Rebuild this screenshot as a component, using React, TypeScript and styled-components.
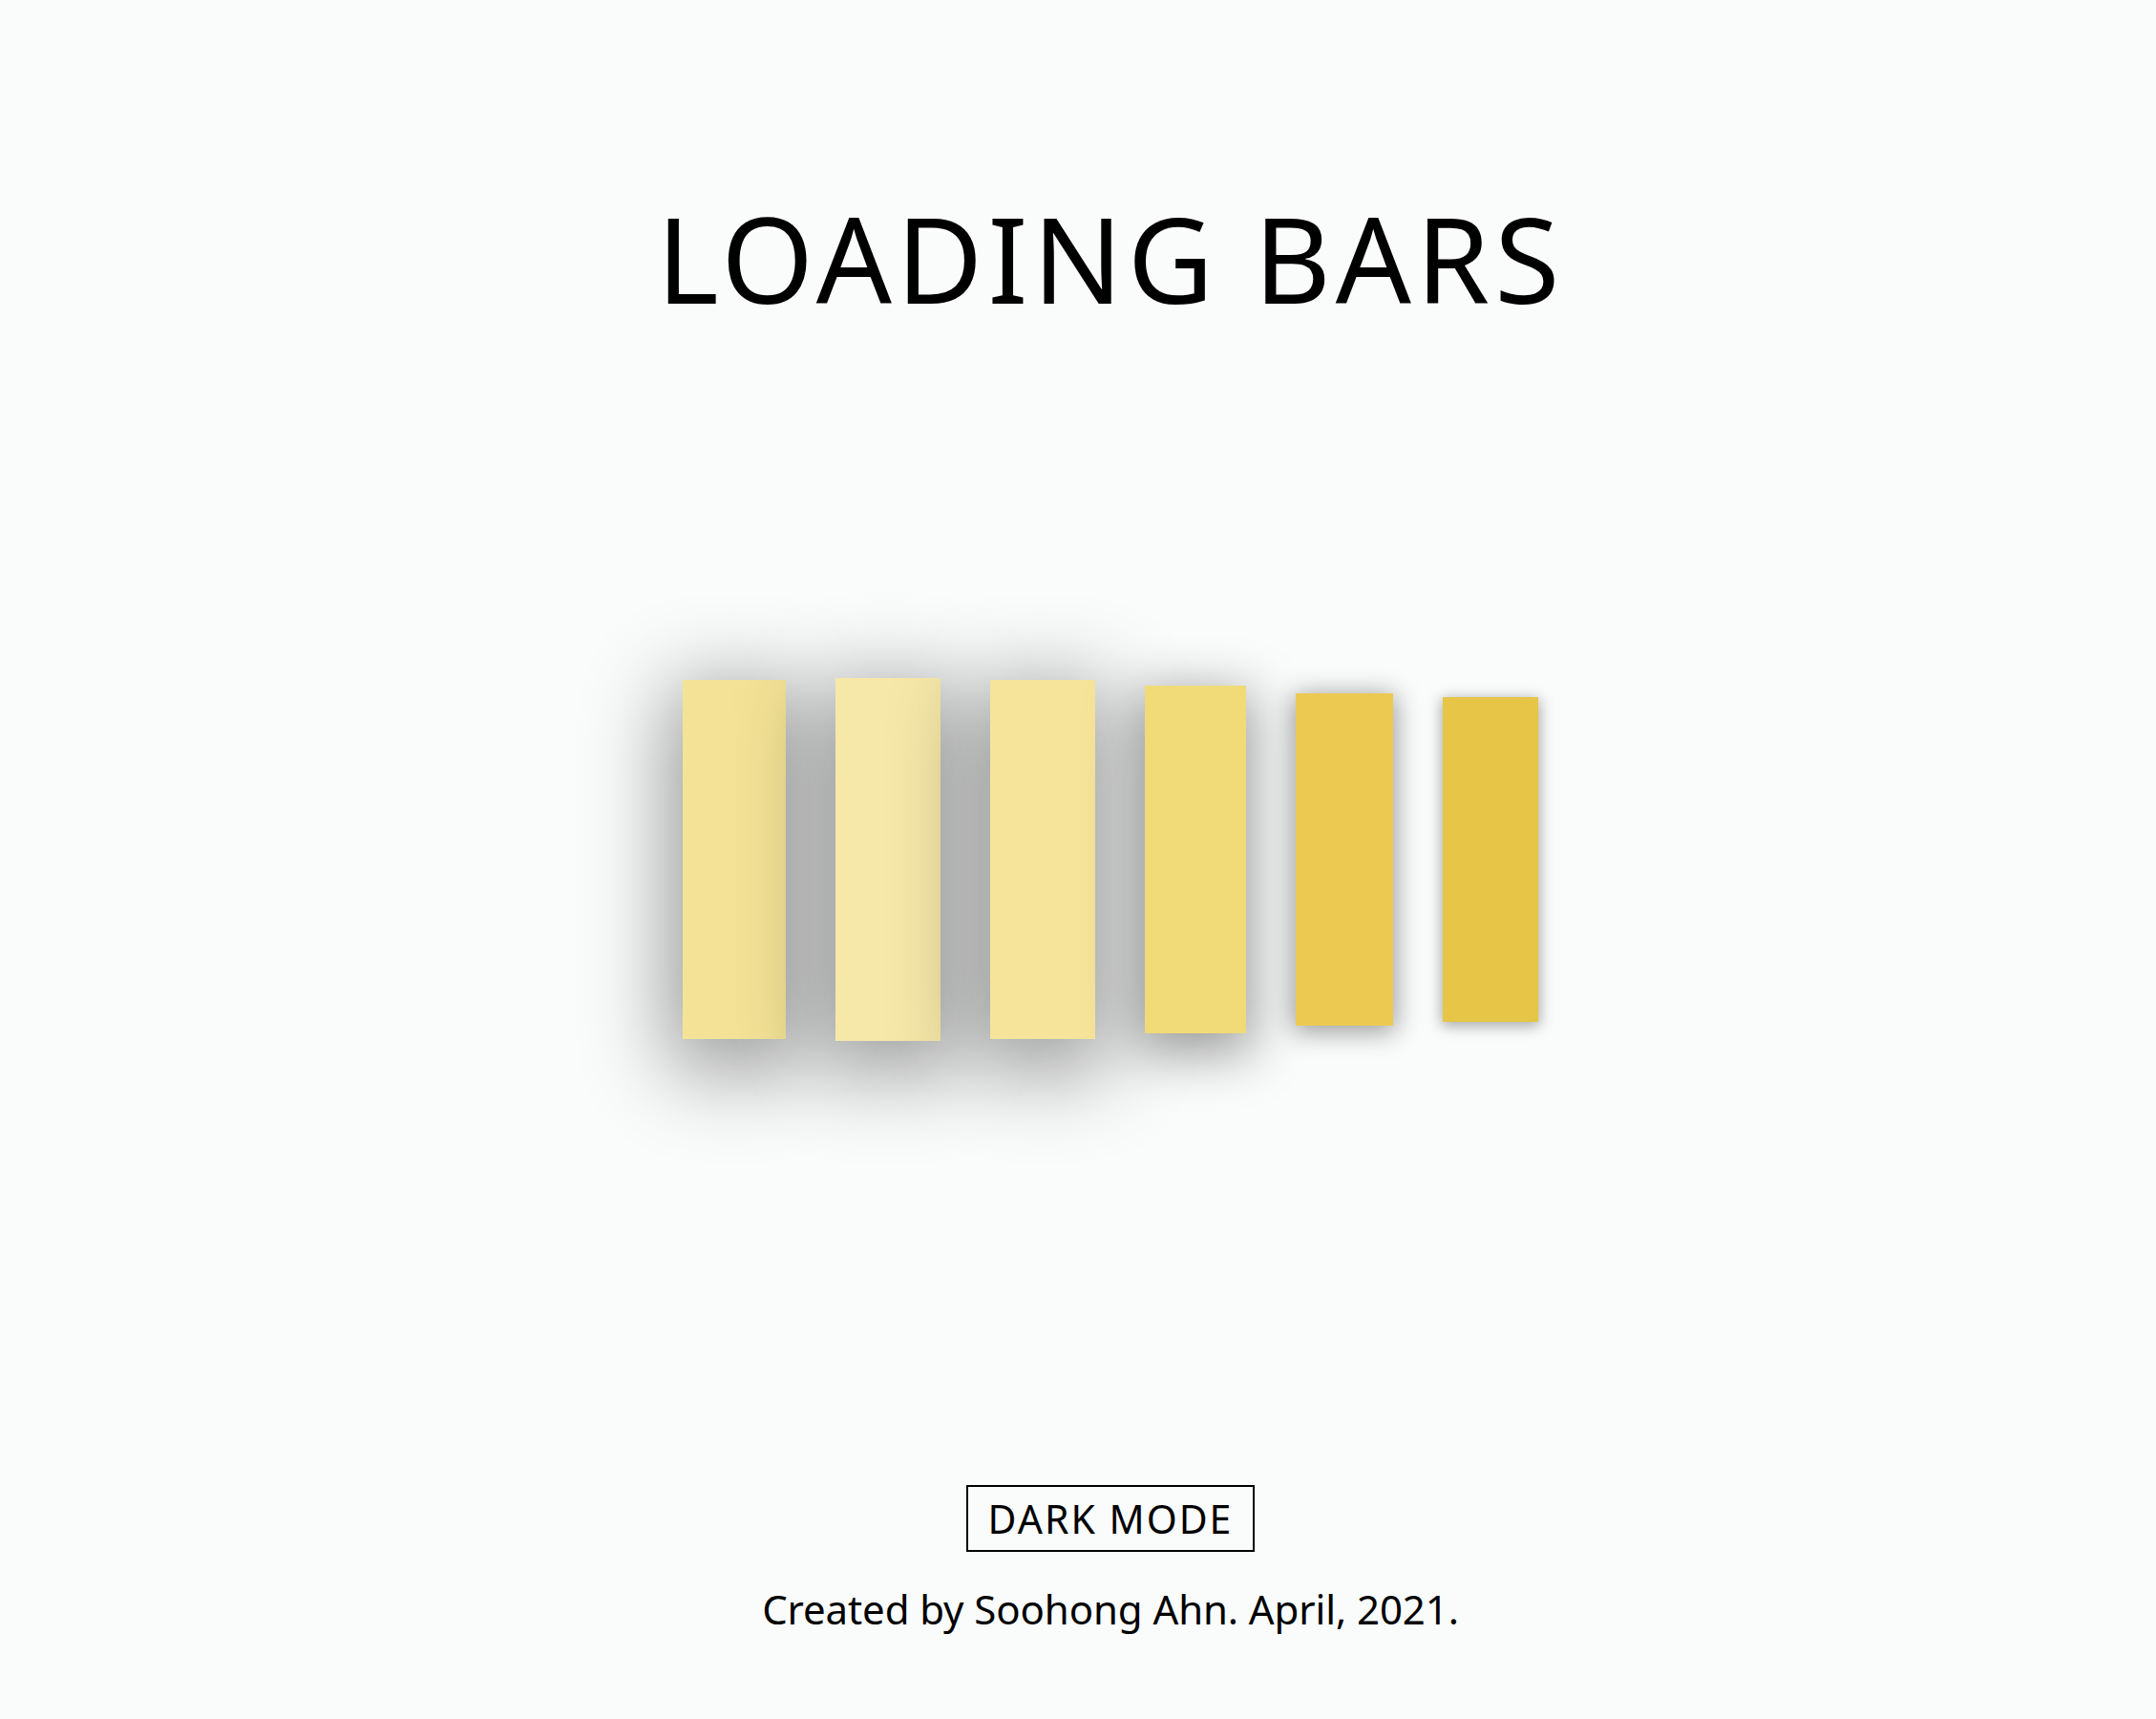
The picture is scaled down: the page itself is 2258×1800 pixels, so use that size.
import React from "react";
import styled, { createGlobalStyle } from "styled-components";

const Global = createGlobalStyle`
  html, body {
    margin: 0;
    padding: 0;
    background: #fafcfb;
  }
  body {
    font-family: "Noto Sans", "Open Sans", sans-serif;
    color: #000;
  }
`;

const Page = styled.main`
  display: flex;
  flex-direction: column;
  align-items: center;
  padding: 208px 0 80px 68px;
  min-height: 100vh;
  box-sizing: border-box;
`;

const Title = styled.h1`
  margin: 0;
  font-family: "Noto Sans", sans-serif;
  font-weight: 400;
  font-size: 124px;
  line-height: 1;
  letter-spacing: 5px;
  white-space: nowrap;
`;

const Stage = styled.section`
  display: flex;
  align-items: center;
  justify-content: center;
  gap: 52px;
  height: 400px;
  margin-top: 368px;
`;

type BarProps = {
  $w: number;
  $h: number;
  $color: string;
  $shadow: string;
};

const Bar = styled.div<BarProps>`
  flex: 0 0 auto;
  width: ${(p) => p.$w}px;
  height: ${(p) => p.$h}px;
  background: ${(p) => p.$color};
  box-shadow: ${(p) => p.$shadow};
`;

const ModeButton = styled.button`
  margin-top: 455px;
  box-sizing: border-box;
  height: 70px;
  width: 302px;
  display: inline-flex;
  align-items: center;
  justify-content: center;
  padding: 0;
  background: transparent;
  border: 2px solid #000;
  border-radius: 0;
  font-family: "Noto Sans", sans-serif;
  font-size: 41px;
  font-weight: 400;
  letter-spacing: 2px;
  color: #000;
  cursor: pointer;
`;

const Credit = styled.p`
  margin: 35px 0 0;
  font-family: "Noto Sans", sans-serif;
  font-size: 42px;
  line-height: 1.2;
  font-weight: 400;
  letter-spacing: -0.1px;
  white-space: nowrap;
`;

const bars = [
  { w: 108, h: 376, color: "#f4e396", shadow: "0 20px 90px 12px rgba(0,0,0,0.41)" },
  { w: 110, h: 380, color: "#f6e8a8", shadow: "0 20px 90px 12px rgba(0,0,0,0.41)" },
  { w: 110, h: 376, color: "#f5e49a", shadow: "0 20px 90px 12px rgba(0,0,0,0.41)" },
  { w: 106, h: 364, color: "#f1da78", shadow: "0 14px 56px 6px rgba(0,0,0,0.4)" },
  { w: 102, h: 348, color: "#ecca51", shadow: "0 4px 26px 2px rgba(0,0,0,0.4)" },
  { w: 100, h: 340, color: "#e7c546", shadow: "0 3px 14px 1px rgba(0,0,0,0.35)" },
];

export default function App() {
  return (
    <>
      <Global />
      <Page>
        <Title>LOADING BARS</Title>
        <Stage>
          {bars.map((b, i) => (
            <Bar key={i} $w={b.w} $h={b.h} $color={b.color} $shadow={b.shadow} />
          ))}
        </Stage>
        <ModeButton type="button">DARK MODE</ModeButton>
        <Credit>Created by Soohong Ahn. April, 2021.</Credit>
      </Page>
    </>
  );
}
